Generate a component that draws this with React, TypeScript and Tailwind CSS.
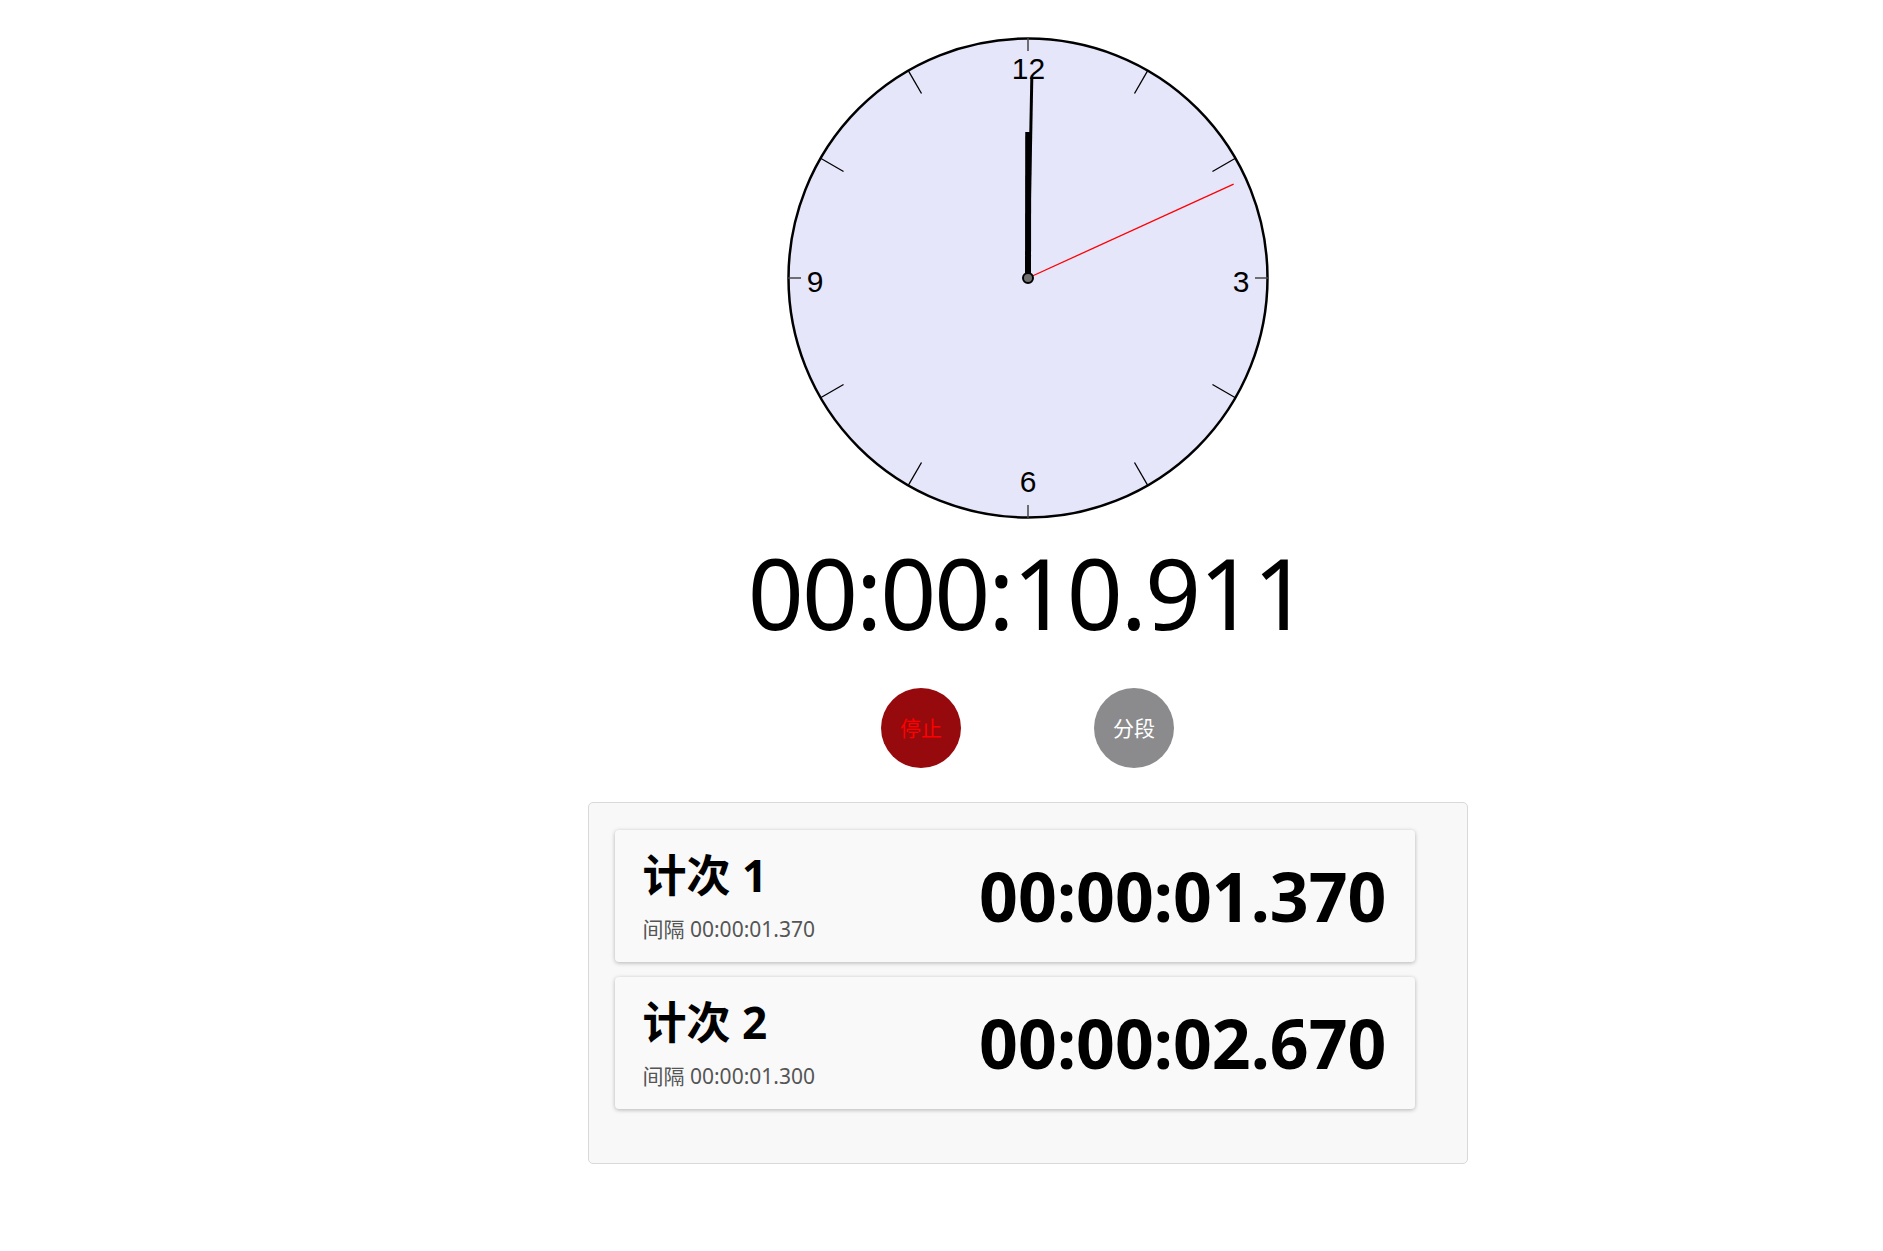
import React from "react";

const CX = 241;
const CY = 241;

function Clock() {
  const ticks = [];
  for (let i = 0; i < 12; i++) {
    const a = (i * 30 * Math.PI) / 180;
    const cardinal = i % 3 === 0;
    const r1 = cardinal ? 227 : 213;
    const r2 = 240;
    ticks.push(
      <line
        key={i}
        x1={CX + r1 * Math.sin(a)}
        y1={CY - r1 * Math.cos(a)}
        x2={CX + r2 * Math.sin(a)}
        y2={CY - r2 * Math.cos(a)}
        stroke={cardinal ? "#444" : "#000"}
        strokeWidth={cardinal ? 1.5 : 1.3}
      />
    );
  }
  const hand = (deg: number, len: number) => {
    const a = (deg * Math.PI) / 180;
    return { x2: CX + len * Math.sin(a), y2: CY - len * Math.cos(a) };
  };
  const hour = hand(0.09, 146);
  const minute = hand(1.09, 200);
  const second = hand(65.47, 226);
  return (
    <svg width={482} height={482} viewBox="0 0 482 482" className="block">
      <circle cx={CX} cy={CY} r={239.5} fill="#e6e6fa" stroke="#000" strokeWidth={2.5} />
      {ticks}
      <g fontFamily="'Liberation Sans', Arial, sans-serif" fontSize={30} fill="#000" textAnchor="middle">
        <text x={241.5} y={41.5}>12</text>
        <text x={454} y={254.5}>3</text>
        <text x={241} y={454.5}>6</text>
        <text x={28} y={254.5}>9</text>
      </g>
      <line x1={CX} y1={CY} x2={minute.x2} y2={minute.y2} stroke="#000" strokeWidth={3} />
      <line x1={CX} y1={CY} x2={hour.x2} y2={hour.y2} stroke="#000" strokeWidth={6} />
      <line x1={CX} y1={CY} x2={second.x2} y2={second.y2} stroke="#ff0000" strokeWidth={1.3} />
      <circle cx={CX} cy={CY} r={5} fill="#707070" stroke="#000" strokeWidth={2} />
    </svg>
  );
}

function LapCard({ n, interval, total }: { n: number; interval: string; total: string }) {
  return (
    <div className="w-[800px] h-[132px] rounded-[4px] bg-[#f9f9f9] shadow-[0_1px_4px_rgba(0,0,0,0.28)] flex items-center justify-between px-[28px]">
      <div className="flex flex-col">
        <div className="text-[44px] font-bold leading-none text-black">计次 {n}</div>
        <div className="mt-[22px] text-[21px] leading-none text-[#555]">间隔 {interval}</div>
      </div>
      <div className="text-[68px] font-bold leading-none text-black">{total}</div>
    </div>
  );
}

export default function App() {
  return (
    <div
      className="w-full min-h-screen bg-white flex justify-center pl-[172px]"
      style={{ fontFamily: "'Noto Sans', 'Noto Sans CJK SC', sans-serif" }}
    >
      <div className="flex flex-col items-center pt-[37px]">
        <Clock />
        <div className="mt-[24px] text-[98px] leading-none tracking-[-2px] text-black">00:00:10.911</div>
        <div className="mt-[47px] flex gap-[133px]">
          <button className="w-[80px] h-[80px] rounded-full bg-[#960a0d] text-[#ff0000] text-[21px] leading-none flex items-center justify-center">
            停止
          </button>
          <button className="w-[80px] h-[80px] rounded-full bg-[#8b8b8d] text-white text-[21px] leading-none flex items-center justify-center">
            分段
          </button>
        </div>
        <div className="mt-[34px] w-[880px] h-[362px] border border-[#d9d9d9] rounded-[5px] bg-[#f8f8f8] pl-[26px] pt-[27px] flex flex-col gap-[15px]">
          <LapCard n={1} interval="00:00:01.370" total="00:00:01.370" />
          <LapCard n={2} interval="00:00:01.300" total="00:00:02.670" />
        </div>
      </div>
    </div>
  );
}
